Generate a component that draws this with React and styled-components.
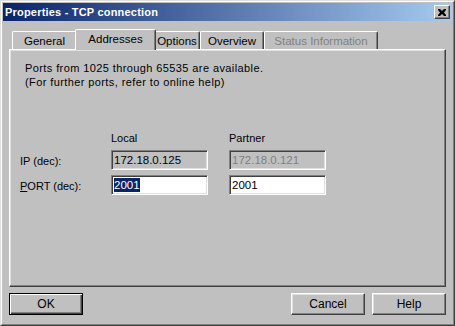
import React from "react";
import styled, { createGlobalStyle } from "styled-components";

const GlobalStyle = createGlobalStyle`
  html, body {
    margin: 0;
    padding: 0;
    background: #c0c0c0;
  }
  * {
    box-sizing: border-box;
  }
`;

const Window = styled.div`
  width: 455px;
  height: 326px;
  background: #c0c0c0;
  border: 1px solid;
  border-color: #dfdfdf #404040 #404040 #dfdfdf;
  font-family: "Liberation Sans", Arial, sans-serif;
  font-size: 11px;
  color: #000;
  display: flex;
  flex-direction: column;
`;

const WindowInner = styled.div`
  flex: 1;
  border: 1px solid;
  border-color: #ffffff #808080 #808080 #ffffff;
  padding: 1px;
  display: flex;
  flex-direction: column;
`;

const TitleBar = styled.div`
  height: 18px;
  display: flex;
  align-items: center;
  justify-content: space-between;
  padding: 0 2px 0 2px;
  background: linear-gradient(to right, #0a246a, #a6caf0);
`;

const Title = styled.span`
  color: #fff;
  font-weight: bold;
  font-size: 11px;
  letter-spacing: 0.2px;
`;

const CloseButton = styled.div`
  width: 16px;
  height: 14px;
  background: #c0c0c0;
  border: 1px solid;
  border-color: #ffffff #404040 #404040 #ffffff;
  box-shadow: inset -1px -1px 0 #808080;
  display: flex;
  align-items: center;
  justify-content: center;
`;

const Body = styled.div`
  flex: 1;
  padding: 8px 6px 0 6px;
  display: flex;
  flex-direction: column;
`;

const TabStrip = styled.div`
  display: flex;
  align-items: flex-end;
  height: 20px;
  padding-left: 3px;
  position: relative;
  z-index: 1;
`;

const Tab = styled.div`
  width: ${(p) => p.$w}px;
  height: ${(p) => (p.$active ? 21 : 18)}px;
  margin: ${(p) => (p.$active ? "0 -2px -1px -2px" : "0")};
  background: #c0c0c0;
  border-top: 1px solid #fff;
  border-left: 1px solid #fff;
  border-right: 1px solid #404040;
  box-shadow: inset -1px 0 0 #808080;
  border-radius: 2px 2px 0 0;
  display: flex;
  align-items: center;
  justify-content: center;
  padding-bottom: ${(p) => (p.$active ? 3 : 0)}px;
  color: ${(p) => (p.$disabled ? "#808080" : "#000")};
  position: relative;
  z-index: ${(p) => (p.$active ? 2 : 1)};
  white-space: nowrap;
  font-size: 11.5px;
`;

const Panel = styled.div`
  height: 238px;
  border: 1px solid;
  border-color: #ffffff #404040 #404040 #ffffff;
  box-shadow: inset -1px -1px 0 #808080, inset 1px 1px 0 #dfdfdf;
  padding: 11px 15px 0 15px;
`;

const Note = styled.p`
  margin: 0;
  line-height: 14px;
  letter-spacing: 0.4px;
`;

const FieldGrid = styled.div`
  display: grid;
  grid-template-columns: 70px 97px 97px;
  column-gap: 21px;
  row-gap: 5px;
  margin-top: 43px;
  margin-left: -5px;
  align-items: center;
`;

const ColHead = styled.div`
  height: 14px;
  margin-bottom: -1px;
`;

const Label = styled.div`
  padding-top: 2px;
  white-space: nowrap;
`;

const Field = styled.div`
  height: 20px;
  border: 1px solid;
  border-color: #808080 #ffffff #ffffff #808080;
  box-shadow: inset 1px 1px 0 #404040, inset -1px -1px 0 #dfdfdf;
  background: ${(p) => (p.$editable ? "#fff" : "#c0c0c0")};
  color: ${(p) => (p.$disabled ? "#808080" : "#000")};
  padding: 2px 2px 0 2px;
  font-size: 11.5px;
  line-height: 15px;
  white-space: nowrap;
`;

const Selected = styled.span`
  background: #0a246a;
  color: #fff;
  padding: 1px 0;
`;

const Footer = styled.div`
  display: flex;
  align-items: center;
  padding-top: 6px;
  gap: 7px;
`;

const Button = styled.div`
  width: 74px;
  height: 22px;
  background: #c0c0c0;
  border: 1px solid;
  border-color: ${(p) =>
    p.$default ? "#000" : "#ffffff #404040 #404040 #ffffff"};
  box-shadow: ${(p) =>
    p.$default
      ? "inset 1px 1px 0 #fff, inset -1px -1px 0 #404040, inset -2px -2px 0 #808080"
      : "inset -1px -1px 0 #808080, inset 1px 1px 0 #dfdfdf"};
  display: flex;
  align-items: center;
  justify-content: center;
  font-size: 12px;
  margin-left: ${(p) => (p.$push ? "auto" : "0")};
`;

const tabs = [
  { label: "General", w: 65 },
  { label: "Addresses", w: 81, active: true },
  { label: "Options", w: 46 },
  { label: "Overview", w: 64 },
  { label: "Status Information", w: 114, disabled: true },
];

export default function App() {
  return (
    <>
      <GlobalStyle />
      <Window>
        <WindowInner>
          <TitleBar>
            <Title>Properties - TCP connection</Title>
            <CloseButton>
              <svg width="8" height="7" viewBox="0 0 8 7">
                <path
                  d="M0 0h2l2 2 2-2h2v1L6 3.5 8 6v1H6L4 5 2 7H0V6l2-2.5L0 1z"
                  fill="#000"
                />
              </svg>
            </CloseButton>
          </TitleBar>
          <Body>
            <TabStrip>
              {tabs.map((t) => (
                <Tab
                  key={t.label}
                  $w={t.w}
                  $active={t.active}
                  $disabled={t.disabled}
                >
                  {t.label}
                </Tab>
              ))}
            </TabStrip>
            <Panel>
              <Note>Ports from 1025 through 65535 are available.</Note>
              <Note>(For further ports, refer to online help)</Note>
              <FieldGrid>
                <div />
                <ColHead>Local</ColHead>
                <ColHead>Partner</ColHead>
                <Label>IP (dec):</Label>
                <Field>172.18.0.125</Field>
                <Field $disabled>172.18.0.121</Field>
                <Label>
                  <u>P</u>ORT (dec):
                </Label>
                <Field $editable>
                  <Selected>2001</Selected>
                </Field>
                <Field $editable>2001</Field>
              </FieldGrid>
            </Panel>
            <Footer>
              <Button $default>OK</Button>
              <Button $push>Cancel</Button>
              <Button>Help</Button>
            </Footer>
          </Body>
        </WindowInner>
      </Window>
    </>
  );
}
